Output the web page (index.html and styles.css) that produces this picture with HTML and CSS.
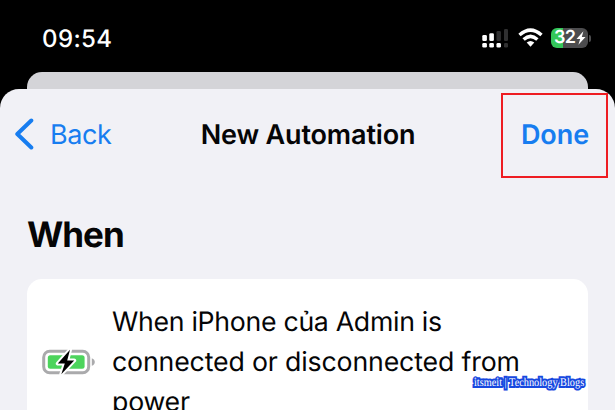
FILE: index.html
```
<!DOCTYPE html>
<html lang="en">
<head>
<meta charset="utf-8">
<title>New Automation</title>
<link rel="stylesheet" href="styles.css">
</head>
<body>
<div class="screen">
  <header class="status">
    <span class="time">09:54</span>
    <div class="indicators">
      <svg class="signal" width="27" height="21" viewBox="0 0 27 21">
        <g fill="#303031"><rect x="14.5" y="3" width="4.4" height="10" rx="1.3"/><rect x="22" y="1" width="4" height="12" rx="1.3"/><rect x="22" y="15" width="4" height="4.6" rx="1.3"/></g>
        <g fill="#fff"><rect x="0.3" y="7" width="4.6" height="6" rx="1.3"/><rect x="7.3" y="5.2" width="4.6" height="7.8" rx="1.3"/><rect x="0.3" y="15" width="4.6" height="4.6" rx="1.3"/><rect x="7.3" y="15" width="4.6" height="4.6" rx="1.3"/><rect x="14.5" y="15" width="4.4" height="4.6" rx="1.3"/></g>
      </svg>
      <svg class="wifi" width="25" height="20" viewBox="0 0 25 20">
        <g fill="none" stroke="#fff" stroke-width="3.4"><path d="M1.5 7.1Q12.5-2.9 23.5 7.1"/><path d="M5.6 11.6Q12.5 5.2 19.4 11.6"/></g>
        <path d="M8.7 14.5Q12.5 11.5 16.3 14.5L12.5 18.7Z" fill="#fff"/>
      </svg>
      <div class="level">
        <span>32</span>
        <svg width="10" height="14" viewBox="0 0 10 14"><path d="M7.4.2.5 7.9h3.7L2.4 13.7 9.5 5.9H5.8Z" fill="#fff"/></svg>
      </div>
      <i class="level-tip"></i>
    </div>
  </header>
  <div class="sheet-behind"></div>
  <main class="sheet">
    <nav class="bar">
      <a class="back">
        <svg width="20" height="34" viewBox="0 0 20 34"><path d="M17.3 3.5 3.3 17 17.3 30.5" fill="none" stroke="#177df0" stroke-width="4" stroke-linecap="round" stroke-linejoin="round"/></svg>
        <span>Back</span>
      </a>
      <h1 class="title">New Automation</h1>
      <a class="done">Done</a>
    </nav>
    <h2 class="heading">When</h2>
    <section class="card">
      <svg class="battery" width="54" height="28" viewBox="0 0 54 28">
        <rect x="1.7" y="3.2" width="45" height="21.6" rx="6" fill="#fff" stroke="#aaaaac" stroke-width="3"/>
        <rect x="5.8" y="7.2" width="36.8" height="13.6" rx="2.5" fill="#4cd45c"/>
        <path d="M49.8 10.2c4 1.5 4 6.1 0 7.6Z" fill="#aaaaac"/>
        <path d="M28 1.8 15.8 15.6h7L19.3 26.2 32.2 12.4h-7Z" fill="#000" stroke="#fff" stroke-width="4" stroke-linejoin="round" paint-order="stroke"/>
      </svg>
      <p class="trigger"><span class="l1">When iPhone của Admin is</span><br><span class="l2">connected or disconnected from</span><br><span class="l3">power</span></p>
    </section>
  </main>
  <div class="highlight"></div>
  <div class="watermark">itsmeit | Technology Blogs</div>
</div>
</body>
</html>
```

FILE: styles.css
```
* { box-sizing: border-box; }
body { margin: 0; background: #000; font-family: Inter, "Liberation Sans", sans-serif; color: #050506; text-rendering: geometricPrecision; }
.screen { position: relative; width: 615px; height: 410px; overflow: hidden; display: flex; flex-direction: column; background: #000; }
.status { height: 72px; flex: none; display: flex; justify-content: space-between; align-items: flex-start; padding: 0 24px 0 42px; color: #fff; }
.time { font-size: 24px; font-weight: 500; line-height: 28px; margin-top: 25px; letter-spacing: 0.4px; }
.indicators { display: flex; align-items: flex-start; padding-top: 28px; }
.signal { margin-right: 9px; }
.wifi { margin-right: 8px; }
.level { width: 37px; height: 20px; border-radius: 6px; display: flex; align-items: center; padding-left: 3px; background: linear-gradient(90deg, #34c759 0 12px, #4c4c4e 12px); font-size: 18px; font-weight: 600; line-height: 20px; letter-spacing: -0.6px; }
.level svg { margin-left: 1px; flex: none; }
.level-tip { width: 2px; height: 7px; margin: 7px 0 0 1px; background: #4c4c4e; border-radius: 0 2px 2px 0; }
.sheet-behind { flex: none; height: 17px; margin: 0 27px; border-radius: 15px 15px 0 0; background: #d4d4d8; }
.sheet { flex: 1; min-height: 0; padding: 0 27px; border-radius: 19px 19px 0 0; background: #f1f1f6; }
.bar { height: 91px; margin: 0 -27px; display: grid; grid-template-columns: 1fr auto 1fr; align-items: center; padding: 0 26px 0 14px; font-size: 27px; line-height: 34px; }
.back { display: flex; align-items: center; color: #177df0; }
.back svg { margin-top: -1px; }
.back span { margin-left: 16px; letter-spacing: -0.4px; }
.title { margin: 0 0 0 13px; font-size: 27px; font-weight: 600; letter-spacing: -0.15px; }
.done { justify-self: end; font-weight: 600; color: #177df0; letter-spacing: -0.1px; }
.heading { margin: 33px 0 0; font-size: 35px; font-weight: 700; line-height: 44px; letter-spacing: -1px; }
.card { margin-top: 22px; height: 200px; padding: 23px 15px; border-radius: 15px; background: #fff; display: flex; }
.battery { flex: none; margin: 46px 16px 0 0; }
.trigger { margin: 0; font-size: 26.7px; line-height: 40px; white-space: nowrap; }
.l1 { letter-spacing: -0.3px; }
.l2 { letter-spacing: -0.15px; }
.l3 { letter-spacing: -0.2px; }
.highlight { position: absolute; left: 501px; top: 93px; width: 107px; height: 85px; border: 2px solid #ee1c22; }
.watermark { position: absolute; left: 474px; top: 375px; font: 11.8px/15px "Liberation Serif", serif; color: #fff; white-space: nowrap; -webkit-text-stroke: 4px #1748e0; paint-order: stroke fill; transform: scaleX(0.873); transform-origin: 0 0; }
```
